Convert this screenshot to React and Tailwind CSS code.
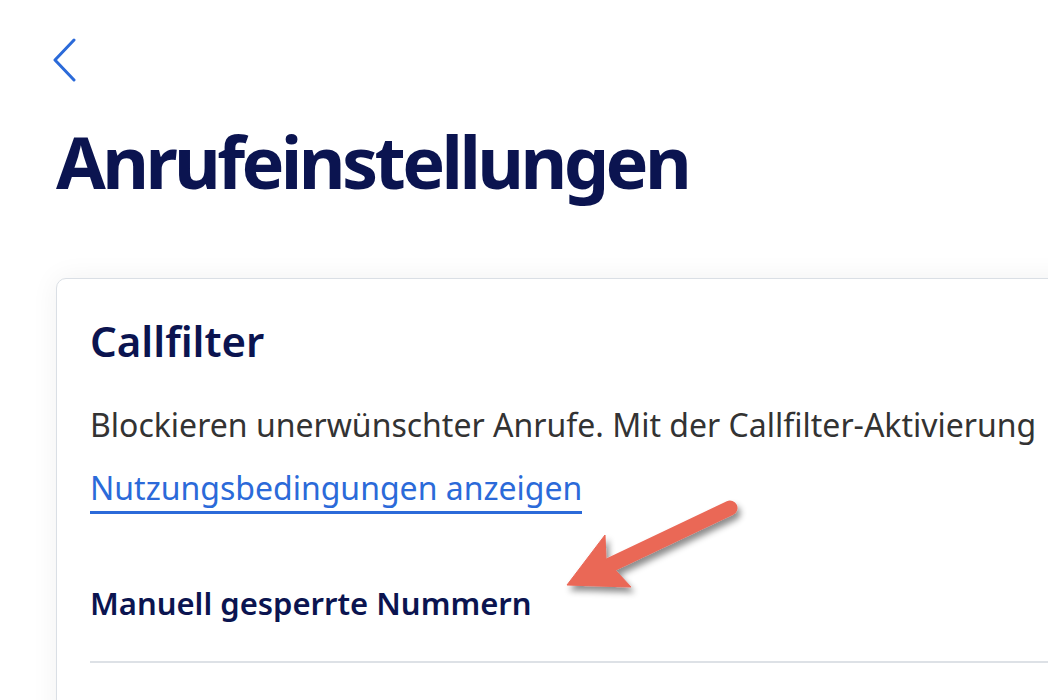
import React from 'react';

const Arrow = () => (
    <svg className="absolute left-0 top-0 pointer-events-none" width="1048" height="700" viewBox="0 0 1048 700">
        <defs>
            <filter id="arrowShadow" x="-20%" y="-20%" width="140%" height="140%">
                <feDropShadow dx="3" dy="5" stdDeviation="3" floodColor="#000" floodOpacity="0.45" />
            </filter>
        </defs>
        <g filter="url(#arrowShadow)" fill="#ea6757" stroke="#ea6757">
            <line x1="730" y1="508" x2="610" y2="565" strokeWidth="15" strokeLinecap="round" />
            <path d="M567 585 L605 535 L606 560 L631 587 Z" strokeWidth="1" strokeLinejoin="miter" />
        </g>
    </svg>
);

const App = () => {
    return (
        <div className="relative w-[1048px] h-[700px] overflow-hidden bg-white" style={{ fontFamily: '"Noto Sans", "Open Sans", sans-serif' }}>
            <div className="pl-[56px] pt-[38px]">
                <button className="block -ml-[6px] w-[30px] h-[44px]">
                    <svg width="30" height="46" viewBox="0 0 30 46" fill="none">
                        <path d="M24 2 L5 22 L24 42" stroke="#2b6ad9" strokeWidth="3" strokeLinecap="round" strokeLinejoin="round" />
                    </svg>
                </button>
                <h1 className="mt-[34px] text-[72px] leading-[90px] font-bold tracking-[-0.05em] text-[#0b1450]">
                    Anrufeinstellungen
                </h1>
                <div className="mt-[72px] w-[1100px] bg-white border-[1.5px] border-[#dadfe5] rounded-[10px] shadow-[0_0_28px_rgba(0,0,0,0.06)] pl-[33px] pt-[32px] pb-[200px]">
                    <h2 className="text-[42px] leading-[60px] font-semibold text-[#0b1450]">Callfilter</h2>
                    <p className="mt-[32px] text-[32px] leading-[44px] text-[#333333] whitespace-nowrap">
                        Blockieren unerwünschter Anrufe. Mit der Callfilter-Aktivierung
                    </p>
                    <a href="#" className="inline-block mt-[21px] pb-[3px] text-[32px] leading-[40px] text-[#2b6ad9] border-b-[3px] border-[#2b6ad9]">
                        Nutzungsbedingungen anzeigen
                    </a>
                    <h3 className="mt-[69px] text-[31px] leading-[40px] font-semibold text-[#0b1450]">Manuell gesperrte Nummern</h3>
                    <div className="mt-[38px] h-[2px] bg-[#dde1e6]" />
                </div>
            </div>
            <Arrow />
        </div>
    );
};

export default App;
